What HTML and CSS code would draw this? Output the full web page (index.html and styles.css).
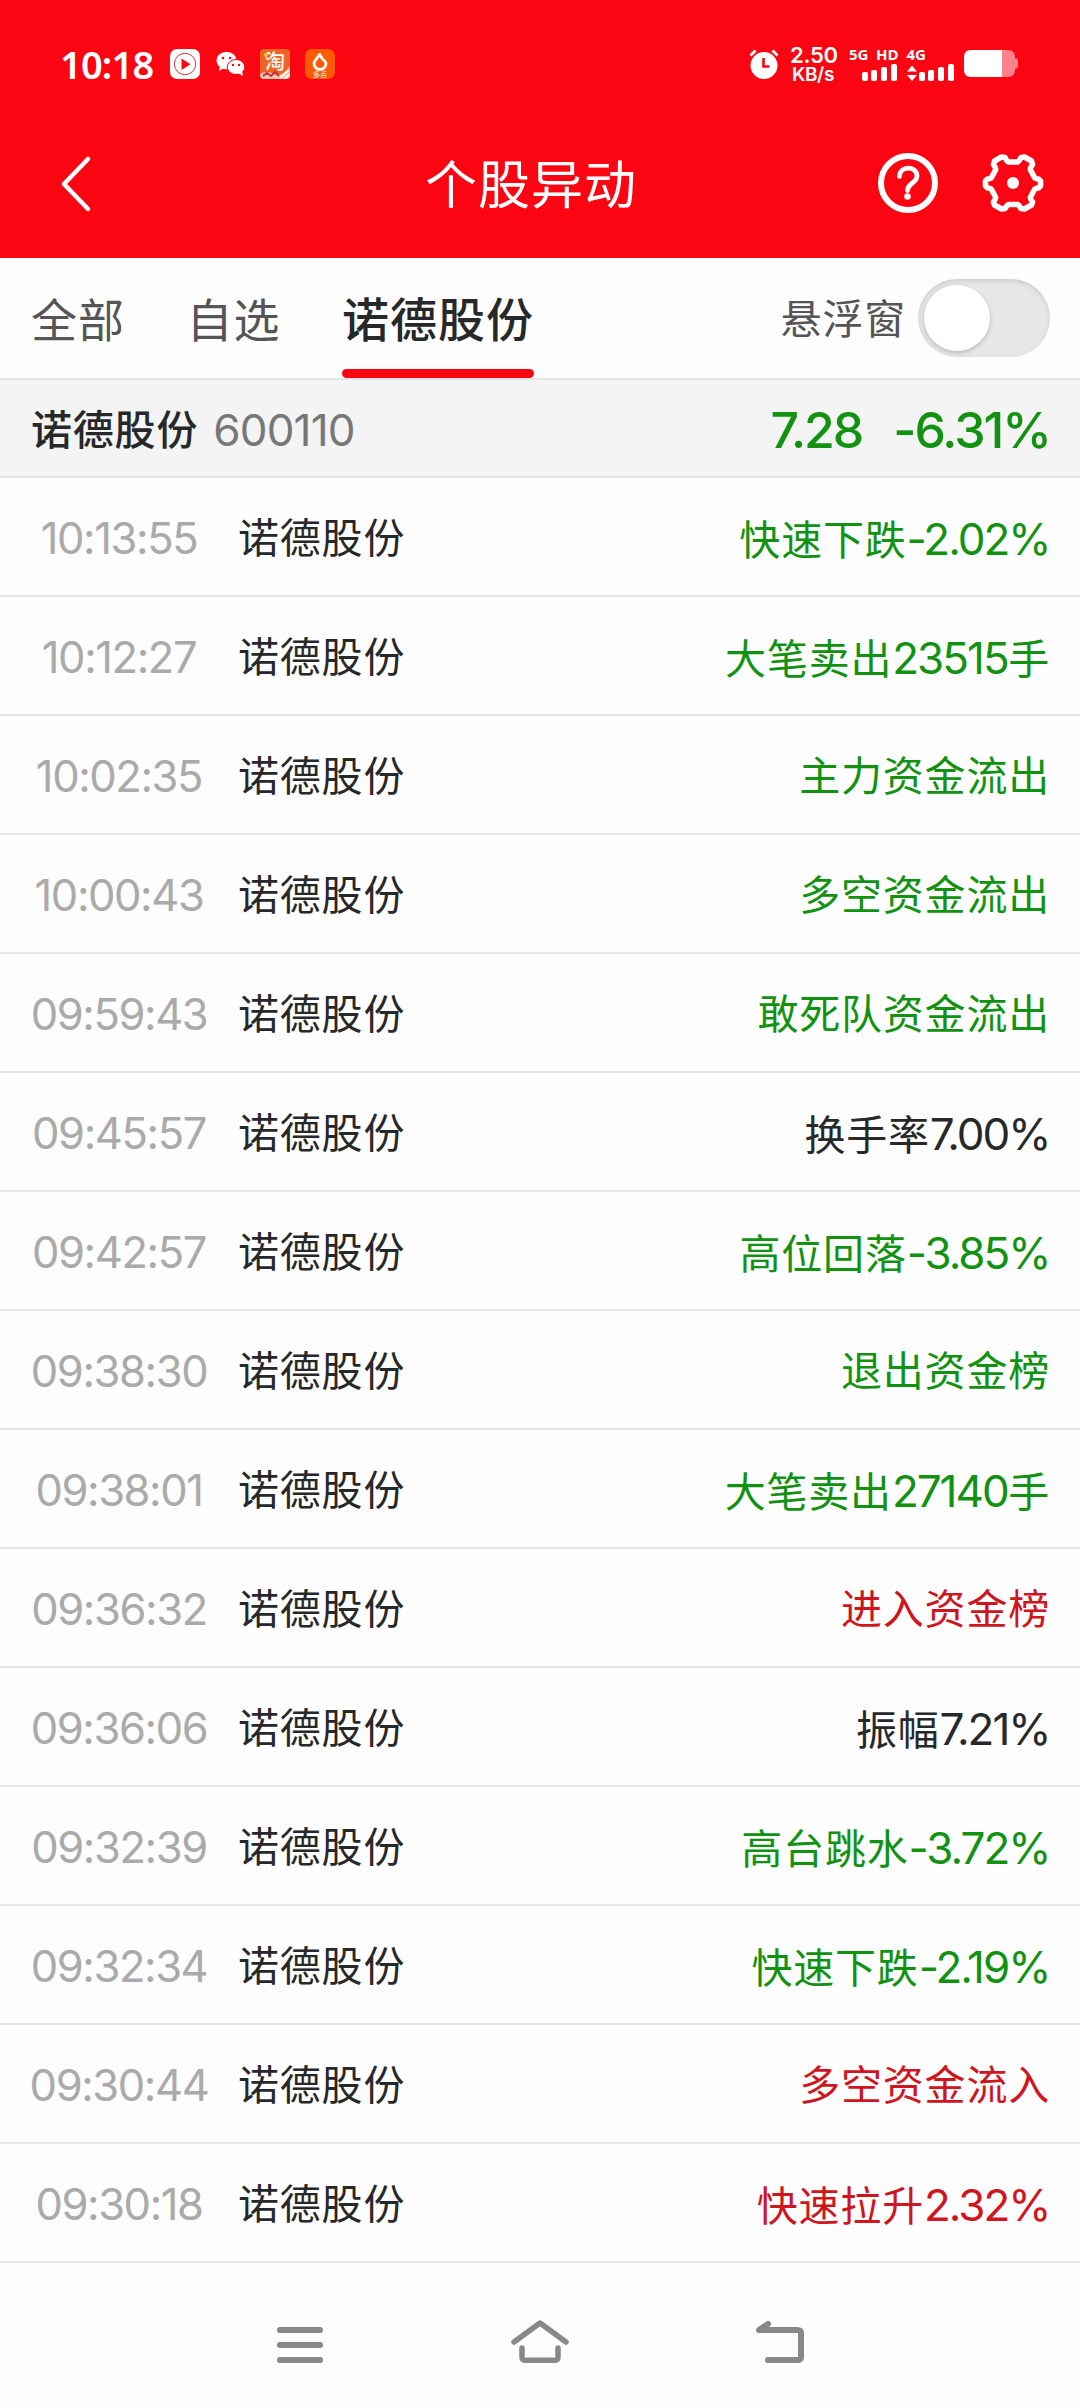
FILE: index.html
```html
<!DOCTYPE html>
<html lang="zh-CN">
<head>
<meta charset="utf-8">
<title>个股异动</title>
<link rel="stylesheet" href="styles.css">
</head>
<body>
<header class="top">
  <div class="status">
    <div class="status-left">
      <span class="clock">10:18</span>
      <svg class="app" viewBox="0 0 30 30"><rect width="30" height="30" rx="7" fill="#fff"/><circle cx="15" cy="15" r="10.7" fill="none" stroke="#d8333c" stroke-width="1"/><path d="M11.5 9.5v11.500l9-5.700z" fill="#fb0613"/></svg>
      <svg class="app" viewBox="0 0 30 30"><ellipse cx="11.500" cy="11.500" rx="10" ry="8.700" fill="#fff"/><path d="M5 17l-1 5 5-3z" fill="#fff"/><ellipse cx="21" cy="18" rx="8.800" ry="7.500" fill="#fff" stroke="#fb0613" stroke-width="1"/><path d="M23 24l5 3-1-5z" fill="#fff"/><g fill="#fb0613"><circle cx="8" cy="9" r="1.300"/><circle cx="15" cy="9" r="1.300"/><circle cx="18" cy="16" r="1.200"/><circle cx="24" cy="16" r="1.200"/></g></svg>
      <svg class="app" viewBox="0 0 30 30"><defs><clipPath id="tile"><rect width="30" height="30" rx="4"/></clipPath></defs><g clip-path="url(#tile)"><rect width="30" height="30" fill="#ed6424"/><circle cx="6" cy="6" r="2" fill="#f6c42c"/><path d="M0 25q7-4 14 0t16-8v13H0z" fill="#ecc7ae"/><path d="M3 27l4-3 4 3 4-4 4 4" stroke="#c4343a" stroke-width="2" fill="none"/><path d="M20 29l9-8M24 30l6-5" stroke="#fff" stroke-width="1.500"/></g><text x="15" y="20" text-anchor="middle" class="tao">淘</text></svg>
      <svg class="app" viewBox="0 0 30 30"><rect width="30" height="30" rx="7" fill="#fe5b03"/><path d="M14 4.500l3.500 5.500C20 12 21 13 21 14.500a6 6 0 0 1-12 0C9 11 13 9.500 14.500 5" fill="none" stroke="#fff" stroke-width="2.800" stroke-linejoin="round"/><text x="15" y="27.500" text-anchor="middle" class="duo">多点</text></svg>
    </div>
    <div class="status-right">
      <svg class="alarm" viewBox="0 0 30 30"><circle cx="15" cy="16.500" r="13.500" fill="#fff"/><path d="M1.500 6.500l5-5M23.500 1.500l5 5" stroke="#fff" stroke-width="2.800"/><path d="M14.500 9v8.500h6" fill="none" stroke="#fb0613" stroke-width="2.600"/></svg>
      <div class="speed"><span class="speed-n">2.50</span><span class="speed-u">KB/s</span></div>
      <svg class="signal" viewBox="0 0 108 36"><g class="net"><text x="0" y="13.500">5G</text><text x="27" y="13.500">HD</text><text x="57.500" y="13.500">4G</text></g><g fill="#fff"><rect x="13" y="26" width="6" height="9" rx="2"/><rect x="22" y="24" width="6" height="11" rx="2"/><rect x="32" y="21" width="6" height="14" rx="2"/><rect x="42" y="18" width="6" height="17" rx="2"/><rect x="70" y="26" width="6" height="9" rx="2"/><rect x="79" y="24" width="6" height="11" rx="2"/><rect x="89" y="21" width="6" height="14" rx="2"/><rect x="99" y="18" width="6" height="17" rx="2"/><path d="M58 25.500l5-6 5 6zM58 29l5 6 5-6z"/></g></svg>
      <svg class="battery" viewBox="0 0 54 28"><path d="M38 0h6q7 0 7 7v1.500h1q2 0 2 2v6q0 2-2 2h-1V20q0 7-7 7h-6z" fill="#fd8289"/><path d="M7 0h31v27H7q-7 0-7-7V7q0-7 7-7z" fill="#fff"/></svg>
    </div>
  </div>
  <div class="titlebar">
    <svg class="back" viewBox="0 0 30 56"><path d="M27 3L3 28l24 25" fill="none" stroke="#fff" stroke-width="4.500" stroke-linecap="round" stroke-linejoin="round"/></svg>
    <h1 class="title">个股异动</h1>
    <div class="actions">
      <svg class="action" viewBox="0 0 60 60"><circle cx="30" cy="30" r="27" fill="none" stroke="#fff" stroke-width="6"/><path d="M21.500 23.500C21.500 12.500 39 12.500 39 23c0 7-9.500 7-9.500 14.500" fill="none" stroke="#fff" stroke-width="4.800" stroke-linecap="round"/><circle cx="29.500" cy="43.500" r="3.300" fill="#fff"/></svg>
      <svg class="action" viewBox="0 0 60 60"><path d="M18.500 4L22 4.500Q24 8.500 25.500 9h9Q36 8.500 38 4.500l3.500-.5 7 4 1 3.500Q46.500 16 47.500 17l4 7.500q1 1.500 4 1.500l2 2v5l-2 2q-3 0-4 1.500l-4 7.500Q46.500 45 49.500 49l-1 3-7 4-3.500-.5Q36 52 34.500 51.500h-9Q24 52 22 55.500l-3.500.5-7-4-1-3q3-4 2-5l-4-7.500Q7.500 35 4.500 35l-2-2v-5l2-2q3 0 4-1.500l4-7.500Q13.500 16 10.500 11.500L11.500 8z" fill="none" stroke="#fff" stroke-width="5.600" stroke-linejoin="round"/><circle cx="30" cy="30" r="6" fill="#fff"/></svg>
    </div>
  </div>
</header>
<nav class="tabs">
  <span class="tab">全部</span>
  <span class="tab">自选</span>
  <span class="tab tab-active">诺德股份</span>
  <span class="float-label">悬浮窗</span>
  <span class="switch"><span class="knob"></span></span>
</nav>
<section class="summary">
  <span class="stock">诺德股份</span>
  <span class="code">600110</span>
  <span class="price">7.28</span>
  <span class="change">-6.31%</span>
</section>
<main class="list">
  <div class="row"><span class="time">10:13:55</span><span class="name">诺德股份</span><span class="event down">快速下跌<b>-2.02%</b></span></div>
  <div class="row"><span class="time">10:12:27</span><span class="name">诺德股份</span><span class="event down">大笔卖出<b>23515</b>手</span></div>
  <div class="row"><span class="time">10:02:35</span><span class="name">诺德股份</span><span class="event down">主力资金流出</span></div>
  <div class="row"><span class="time">10:00:43</span><span class="name">诺德股份</span><span class="event down">多空资金流出</span></div>
  <div class="row"><span class="time">09:59:43</span><span class="name">诺德股份</span><span class="event down">敢死队资金流出</span></div>
  <div class="row"><span class="time">09:45:57</span><span class="name">诺德股份</span><span class="event">换手率<b>7.00%</b></span></div>
  <div class="row"><span class="time">09:42:57</span><span class="name">诺德股份</span><span class="event down">高位回落<b>-3.85%</b></span></div>
  <div class="row"><span class="time">09:38:30</span><span class="name">诺德股份</span><span class="event down">退出资金榜</span></div>
  <div class="row"><span class="time">09:38:01</span><span class="name">诺德股份</span><span class="event down">大笔卖出<b>27140</b>手</span></div>
  <div class="row"><span class="time">09:36:32</span><span class="name">诺德股份</span><span class="event up">进入资金榜</span></div>
  <div class="row"><span class="time">09:36:06</span><span class="name">诺德股份</span><span class="event">振幅<b>7.21%</b></span></div>
  <div class="row"><span class="time">09:32:39</span><span class="name">诺德股份</span><span class="event down">高台跳水<b>-3.72%</b></span></div>
  <div class="row"><span class="time">09:32:34</span><span class="name">诺德股份</span><span class="event down">快速下跌<b>-2.19%</b></span></div>
  <div class="row"><span class="time">09:30:44</span><span class="name">诺德股份</span><span class="event up">多空资金流入</span></div>
  <div class="row"><span class="time">09:30:18</span><span class="name">诺德股份</span><span class="event up">快速拉升<b>2.32%</b></span></div>
</main>
<footer class="navbar">
  <svg class="key" viewBox="0 0 60 60"><path d="M10 15h40M10 30h40M10 45h40" stroke="#888" stroke-width="6" stroke-linecap="round"/></svg>
  <svg class="key" viewBox="0 0 60 60"><g fill="none" stroke="#888" stroke-width="5.500" stroke-linecap="round" stroke-linejoin="round"><path d="M4 27L30 8l26 19"/><path d="M12 33v9q0 3.300 4 3.300h28q4 0 4-3.300v-9"/></g></svg>
  <svg class="key" viewBox="0 0 60 60"><path d="M18 45h29q4 0 4-3V18q0-3-4-3H9l9-6" fill="none" stroke="#888" stroke-width="6" stroke-linecap="round" stroke-linejoin="round"/><path d="M9 15l9-6v6z" fill="#888"/></svg>
</footer>
</body>
</html>
```

FILE: styles.css
```css
* { box-sizing: border-box; }
body {
  margin: 0;
  width: 1080px;
  height: 2408px;
  display: flex;
  flex-direction: column;
  background: #fdfdfd;
  color: #272829;
  font-family: Inter, "Noto Sans CJK SC", sans-serif;
  font-size: 41px;
  letter-spacing: 0.8px;
  line-height: 1;
  white-space: nowrap;
}
svg { display: block; overflow: visible; letter-spacing: 0; }

.top { height: 258px; background: #fa0511; color: #fff; }
.status { height: 128px; display: flex; justify-content: space-between; padding: 0 62px 0 60px; align-items: center; }
.status-left { display: flex; align-items: center; }
.clock { width: 110px; font: 600 38px/1 "Noto Sans", sans-serif; letter-spacing: -0.8px; }
.app { width: 30px; height: 30px; margin-right: 15px; }
.tao { font: 500 20px "Noto Sans CJK SC", sans-serif; fill: #fff; }
.duo { font: 7px "Noto Sans CJK SC", sans-serif; fill: #fff; }
.status-right { display: flex; align-items: center; }
.alarm { width: 30px; height: 30px; margin-right: 11px; }
.speed { width: 59px; display: flex; flex-direction: column; font-weight: 600; }
.speed-n { font-size: 22px; line-height: 20px; letter-spacing: -0.3px; }
.speed-u { font-size: 19px; line-height: 19px; padding-left: 2px; letter-spacing: -0.4px; }
.signal { width: 108px; height: 36px; margin-right: 7px; }
.net { font: 700 15px "Open Sans", sans-serif; fill: #fff; }
.battery { width: 54px; height: 28px; }

.titlebar { height: 112px; display: grid; grid-template-columns: 200px 1fr 200px; align-items: center; }
.back { width: 30px; height: 56px; margin: -1px 0 0 61px; }
.title { margin: 4px -40px 0; padding-right: 18px; text-align: center; font-size: 52px; line-height: 56px; letter-spacing: 1px; font-weight: 400; }
.actions { display: flex; gap: 45px; margin: -2px 0 0 -2px; }
.action { width: 60px; height: 60px; flex: none; }

.tabs { height: 122px; border-bottom: 2px solid #e5e5e5; display: flex; align-items: stretch; padding: 0 30px 0 31px; }
.tab { font-size: 46px; line-height: 124px; height: 120px; letter-spacing: 1px; margin-right: 61.5px; color: #555; }
.tab-active { font-size: 47px; font-weight: 500; color: #272829; margin: 0; position: relative; }
.tab-active::after { content: ""; position: absolute; left: 0; right: 0; bottom: 0; height: 9px; border-radius: 4.5px; background: #fa0511; }
.float-label { margin-left: auto; line-height: 123px; height: 120px; color: #555; }
.switch { width: 132px; height: 78px; margin: 21px 0 0 12px; padding: 6px; border-radius: 39px; background: #e7e7e7; box-shadow: inset 0 2px 5px rgba(0,0,0,.12); }
.knob { display: block; width: 66px; height: 66px; border-radius: 50%; background: #fff; box-shadow: 0 2px 4px rgba(0,0,0,.2); }

.summary { height: 98px; background: #f4f4f4; border-bottom: 2px solid #e5e5e5; display: flex; align-items: center; padding: 4px 30px 0 31px; }
.stock { font-weight: 500; }
.code { margin-left: 15px; color: #777; font-size: 44px; letter-spacing: -0.8px; }
.price, .change { color: #119211; font-size: 50px; font-weight: 500; letter-spacing: -2px; }
.price { margin-left: auto; }
.change { margin-left: 31px; }

.row { height: 119px; border-bottom: 2px solid #e5e5e5; display: flex; align-items: center; padding: 4px 30px 0 24px; }
.time { width: 190px; text-align: center; font-size: 43.5px; letter-spacing: -1.4px; color: #aaa; }
.name { margin-left: 24px; }
.event { margin-left: auto; }
.event b { font-weight: 400; font-size: 44px; line-height: 1; letter-spacing: -2px; margin-right: 0.5px; }
.down { color: #119211; }
.up { color: #cf1520; }

.navbar { flex: 1; display: flex; justify-content: center; gap: 180px; padding-top: 52px; }
.key { width: 60px; height: 60px; }
```
